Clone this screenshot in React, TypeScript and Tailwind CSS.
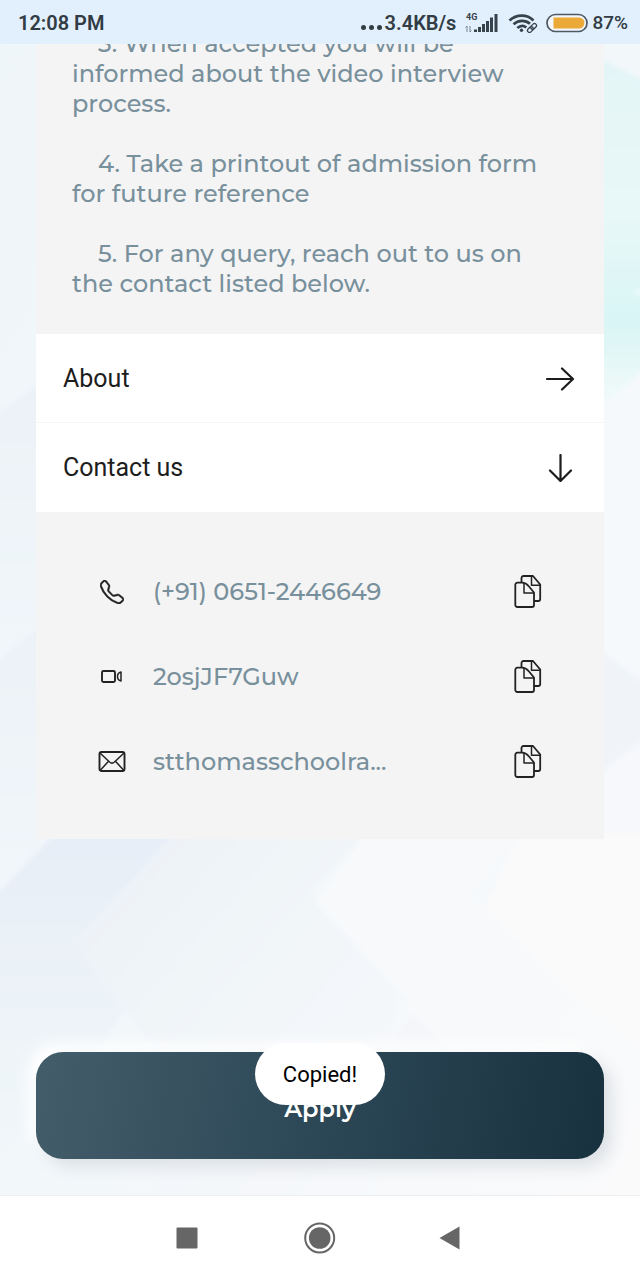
import { BsTelephone } from "react-icons/bs";

function Backdrop() {
  return (
    <svg
      className="absolute inset-0 -z-10 h-full w-full"
      viewBox="0 0 640 1152"
      preserveAspectRatio="none"
      aria-hidden="true"
    >
      <defs>
        <linearGradient id="base" x1="0" y1="0" x2="1" y2="1">
          <stop offset="0" stopColor="#eff6fa" />
          <stop offset="0.5" stopColor="#f2f7fa" />
          <stop offset="1" stopColor="#fafafb" />
        </linearGradient>
        <linearGradient id="aqua" x1="0" y1="0" x2="0" y2="1">
          <stop offset="0" stopColor="#e4f5f7" />
          <stop offset="0.45" stopColor="#e8f8f8" />
          <stop offset="0.75" stopColor="#d9f5f5" />
          <stop offset="1" stopColor="#f5fafa" />
        </linearGradient>
        <linearGradient id="slate" x1="0" y1="0" x2="0" y2="1">
          <stop offset="0" stopColor="#ebf2f7" />
          <stop offset="1" stopColor="#f1f6fa" />
        </linearGradient>
        <linearGradient id="blue" x1="0" y1="0" x2="0" y2="1">
          <stop offset="0" stopColor="#e6eef7" />
          <stop offset="0.5" stopColor="#ecf3f8" />
          <stop offset="1" stopColor="#f1f6f9" />
        </linearGradient>
        <linearGradient id="haze" x1="0" y1="0" x2="1" y2="1">
          <stop offset="0" stopColor="#ebf1f7" />
          <stop offset="0.5" stopColor="#f2f6f9" />
          <stop offset="1" stopColor="#f7f9fb" />
        </linearGradient>
        <filter id="soften">
          <feGaussianBlur stdDeviation="2" />
        </filter>
      </defs>
      <rect width="640" height="1152" fill="url(#base)" />
      <g filter="url(#soften)">
        <polygon points="600,14 650,40 650,340 600,366" fill="url(#aqua)" />
        <polygon points="632,248 650,240 650,256" fill="#ecfafa" />
        <polygon points="600,366 650,320 650,650 600,608" fill="#f6f9fb" />
        <polygon points="600,606 650,645 650,690 600,730" fill="#f0f4f9" />
        <polygon points="600,730 650,690 650,820 600,820" fill="#f6f8fb" />
        <polygon points="-10,376 40,340 40,600 -10,626" fill="url(#slate)" />
        <polygon points="-10,622 40,584 40,830 -10,850" fill="url(#slate)" />
        <polygon points="-10,858 55,790 175,790 75,900 130,960 90,1020 -10,1120" fill="url(#blue)" />
        <polygon points="175,790 365,790 310,850 400,930 370,1160 150,1160 180,1040 75,900" fill="url(#haze)" />
        <polygon points="365,790 520,790 470,850 560,950 440,1008 395,1008 410,960 315,860" fill="#f7f9fb" />
        <polygon points="520,790 650,790 650,1010 580,960 485,865" fill="#fafafb" />
        <polygon points="412,970 450,1008 385,1008" fill="#f4f6f9" />
      </g>
    </svg>
  );
}

function SignalIcon() {
  return (
    <svg className="h-5 w-[34px]" viewBox="0 0 34 20" fill="#37424a" aria-label="Mobile signal">
      <text x="1" y="7" fontSize="9" fontWeight="700" fontFamily="Roboto, sans-serif">
        4G
      </text>
      <path d="M2 13v6M0.5 14.500 2 13M5 13v6M6.500 17.500 5 19" stroke="#78858e" strokeWidth="1" fill="none" />
      <rect x="9" y="16.500" width="3" height="2.500" />
      <rect x="13" y="14" width="3" height="5" />
      <rect x="17" y="11" width="3" height="8" />
      <rect x="21" y="8" width="3" height="11" />
      <rect x="25" y="4.500" width="3" height="14.500" />
      <rect x="29.500" y="1" width="3" height="18" />
    </svg>
  );
}

function WifiIcon() {
  return (
    <svg className="h-5 w-[30px]" viewBox="0 0 30 20" fill="none" stroke="#37424a" aria-label="Wi-Fi">
      <g strokeWidth="2.600">
        <path d="M1.500 7.500c7-6.500 17.500-6.500 24 0" />
        <path d="M5.500 11.300c5-4.500 12-4.500 16.500-.5" />
        <path d="M9.300 15c3-2.600 6.500-2.600 9-.5" />
      </g>
      <circle cx="13.500" cy="17.300" r="1.700" fill="#37424a" stroke="none" />
      <g transform="rotate(-45 24 15)" strokeWidth="1.300">
        <rect x="18.500" y="13" width="6.500" height="4" rx="2" fill="#e2effc" />
        <rect x="23" y="13" width="6.500" height="4" rx="2" />
      </g>
    </svg>
  );
}

function BatteryIcon() {
  return (
    <svg className="h-5 w-[42px]" viewBox="0 0 42 20" aria-label="Battery">
      <rect x="1" y="1.500" width="40" height="17" rx="8.500" fill="#f3f7fb" stroke="#4d5a65" strokeWidth="1.700" />
      <path d="M7.500 4.500H33a5.500 5.500 0 0 1 0 11H7.500z" fill="#eba937" />
    </svg>
  );
}

function ArrowIcon({ down }: { down?: boolean }) {
  return (
    <svg
      className="h-7 w-7"
      viewBox="0 0 28 28"
      fill="none"
      stroke="#1c1c1c"
      strokeWidth="2.200"
      strokeLinecap="round"
      strokeLinejoin="round"
      aria-hidden="true"
    >
      {down ? <path d="M14.500 1v26M4 16.500 14.500 27 25 16.500" /> : <path d="M1 14h26M16 3.500 27 14 16 24.500" />}
    </svg>
  );
}

function VideoIcon() {
  return (
    <svg className="h-7 w-7" viewBox="0 0 28 28" fill="none" stroke="#222" strokeWidth="1.900" strokeLinejoin="round">
      <rect x="4" y="8" width="13" height="11" rx="1.500" />
      <path d="M23 9v9c-2-.4-3.500-2.300-3.500-4.500s1.500-4.100 3.500-4.500z" strokeWidth="1.500" />
    </svg>
  );
}

function MailIcon() {
  return (
    <svg className="h-7 w-7" viewBox="0 0 28 28" fill="none" stroke="#222" strokeWidth="1.900" strokeLinejoin="round">
      <rect x="1.500" y="4" width="25" height="19" rx="2" />
      <path d="M2 5 11.500 14q2.500 2.200 5 0L26 5M2.500 22 10.500 13.300M25.500 22 17.500 13.300" strokeWidth="1.500" />
    </svg>
  );
}

function CopyIcon() {
  return (
    <svg
      className="h-[34px] w-7"
      viewBox="0 0 28 34"
      fill="none"
      stroke="#222"
      strokeWidth="1.800"
      strokeLinejoin="round"
      aria-hidden="true"
    >
      <path d="M7.500 7.500V3a2 2 0 0 1 2-2H19L26.200 9.500V24a2 2 0 0 1-2 2H20" />
      <path d="M17.500 1.200V10.200h8.500" strokeWidth="1.500" />
      <path d="M3.300 7.700H8c3 0 5 1.500 7 3.800l5 6V30a2 2 0 0 1-2 2H3.300a2 2 0 0 1-2-2V9.700a2 2 0 0 1 2-2z" />
      <path d="M10 8.200V18H20" strokeWidth="1.500" />
    </svg>
  );
}

const contacts = [
  {
    label: "phone",
    value: "(+91) 0651-2446649",
    icon: <BsTelephone className="h-6 w-6" color="#222" stroke="#222" strokeWidth="0.3" />,
  },
  { label: "video code", value: "2osjJF7Guw", icon: <VideoIcon /> },
  { label: "email", value: "stthomasschoolra...", icon: <MailIcon /> },
];

export default function App() {
  return (
    <div className="flex min-h-screen flex-col bg-white font-[Roboto,sans-serif]">
      <header className="flex h-11 items-center justify-between bg-[#e2effc] pt-0.5 pr-3 pl-[18px] text-[20px] font-semibold text-[#313c44]">
        <time>12:08 PM</time>
        <div className="flex items-center">
          <span className="mr-[3px] flex gap-[3px] pt-2" aria-hidden="true">
            <i className="size-[5px] rounded-full bg-[#313c44]" />
            <i className="size-[5px] rounded-full bg-[#313c44]" />
            <i className="size-[5px] rounded-full bg-[#313c44]" />
          </span>
          <span className="mr-[9px]">3.4KB/s</span>
          <span className="mr-[9px]">
            <SignalIcon />
          </span>
          <span className="mr-2">
            <WifiIcon />
          </span>
          <span className="mr-1">
            <BatteryIcon />
          </span>
          <span className="text-[19px] font-medium">87%</span>
        </div>
      </header>

      <main className="relative isolate flex flex-1 flex-col px-9 pb-9">
        <Backdrop />

        <section className="flex h-[290px] flex-col justify-end overflow-hidden bg-[#f4f4f4] pr-12 pb-[35px] pl-9 font-[Montserrat,Inter,sans-serif] text-[24px] leading-[30px] font-medium text-[#78909c]">
          <div className="flex flex-col gap-[30px]">
            <p className="indent-[26px]">3. When accepted you will be informed about the video interview process.</p>
            <p className="indent-[26px]">4. Take a printout of admission form for future reference</p>
            <p className="indent-[26px]">5. For any query, reach out to us on the contact listed below.</p>
          </div>
        </section>

        <button className="flex h-[89px] items-center justify-between border-b border-[#f6f6f6] bg-white pt-0.5 pr-[30px] pl-[27px] text-[25px] text-[#1d1d1d]">
          About
          <ArrowIcon />
        </button>
        <button className="flex h-[89px] items-center justify-between bg-white pr-[30px] pl-[27px] text-[25px] text-[#1d1d1d]">
          Contact us
          <ArrowIcon down />
        </button>

        <ul className="bg-[#f4f4f4] px-[62px] pt-[37px] pb-[35px]">
          {contacts.map((c) => (
            <li key={c.label} className="flex h-[85px] items-center">
              <span className="mr-[27px] flex w-7 justify-center">{c.icon}</span>
              <span className="flex-1 font-[Montserrat,Inter,sans-serif] text-[24px] font-medium text-[#78909c]">
                {c.value}
              </span>
              <button aria-label={`Copy ${c.label}`}>
                <CopyIcon />
              </button>
            </li>
          ))}
        </ul>

        <div className="relative mt-auto">
          <button className="block h-[107px] w-full rounded-[27px] bg-linear-[100deg,#445d6b,#2c4756_50%,#18313f] pt-1.5 font-[Montserrat,Inter,sans-serif] text-[24px] font-semibold text-white shadow-[8px_8px_16px_#dde1e5,-8px_-8px_16px_#ffffff]">
            Apply
          </button>
          <div
            role="status"
            className="absolute -top-[9px] left-1/2 flex h-[62px] w-[130px] -translate-x-1/2 items-center justify-center rounded-full bg-white text-[22px] text-black"
          >
            Copied!
          </div>
        </div>
      </main>

      <nav className="flex h-[85px] items-center justify-center border-t border-[#eeeff1] bg-white text-[#666]">
        <button aria-label="Recent apps" className="flex w-[132px] justify-center">
          <svg className="h-8 w-8" viewBox="0 0 32 32" fill="currentColor">
            <rect x="4.500" y="5.500" width="21" height="21" rx="1" />
          </svg>
        </button>
        <button aria-label="Home" className="flex w-[132px] justify-center">
          <svg className="h-8 w-8" viewBox="0 0 32 32" fill="currentColor">
            <circle cx="15.700" cy="16" r="14.500" fill="none" stroke="currentColor" strokeWidth="2" />
            <circle cx="15.700" cy="16" r="10.800" />
          </svg>
        </button>
        <button aria-label="Back" className="flex w-[132px] justify-center">
          <svg className="h-8 w-8" viewBox="0 0 32 32" fill="currentColor">
            <path d="M3.500 16 23.500 4.500v23z" />
          </svg>
        </button>
      </nav>
    </div>
  );
}
